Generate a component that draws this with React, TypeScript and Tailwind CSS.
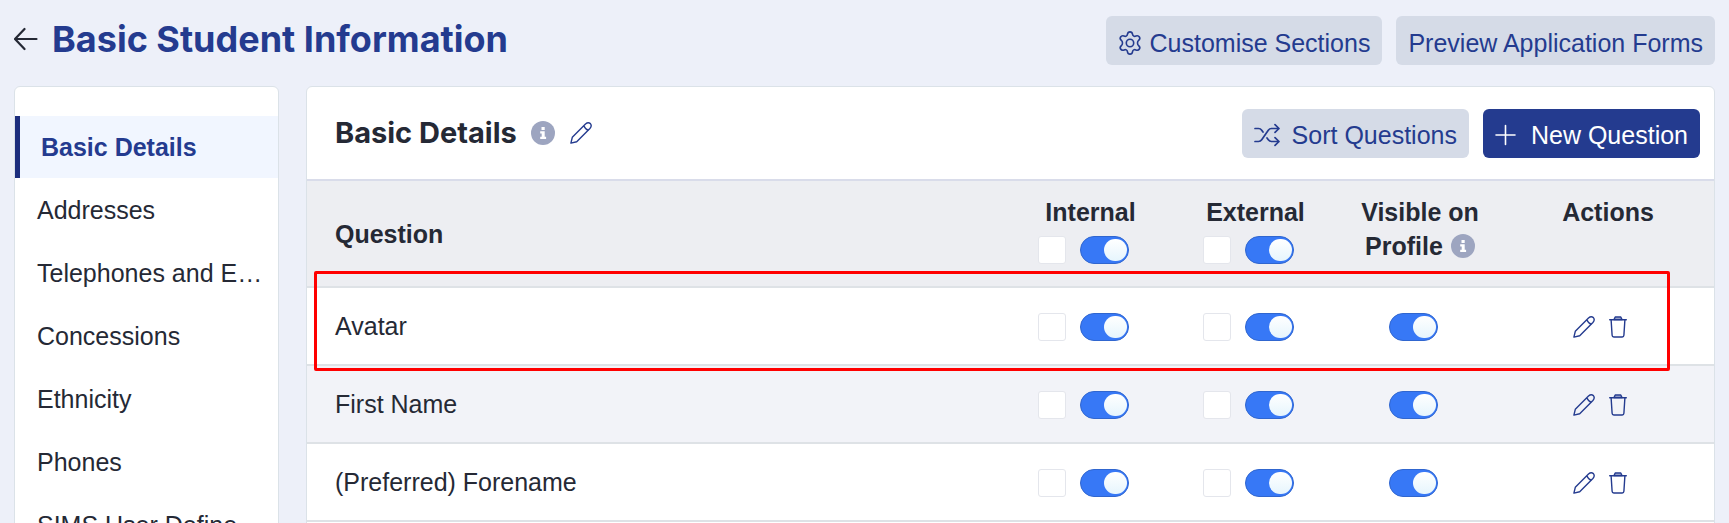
import type { ReactNode } from "react";

const INK = "text-[#252935]";
const BRAND = "text-[#243b8f]";

const sections = [
  "Basic Details",
  "Addresses",
  "Telephones and E…",
  "Concessions",
  "Ethnicity",
  "Phones",
  "SIMS User Define…",
];

const questions = [
  { label: "Avatar", highlighted: true },
  { label: "First Name", highlighted: false },
  { label: "(Preferred) Forename", highlighted: false },
];

function BackIcon() {
  return (
    <svg className="h-6 w-6" viewBox="0 0 24 24" fill="none" stroke="currentColor" strokeWidth="2.2" strokeLinecap="round" strokeLinejoin="round" aria-hidden="true">
      <path d="M22.500 12H1M10.500 2 1 12l9.500 10" />
    </svg>
  );
}

function GearIcon() {
  return (
    <svg className="h-6 w-6" viewBox="0 0 24 24" fill="none" stroke="currentColor" strokeWidth="1.6" strokeLinejoin="round" aria-hidden="true">
      <path d="M9.500 3.200Q9.800.900 12 .900t2.500 2.300q.2 1.400 1.200 1.900t2.200 0q2.300-.9 3.500.9t-.8 3.400q-1.100.9-1.100 2.600t1.100 2.600q2 1.600.8 3.400t-3.500.9q-1.200-.5-2.200 0t-1.200 1.900q-.3 2.300-2.500 2.300t-2.500-2.300q-.2-1.400-1.200-1.900t-2.200 0q-2.300.9-3.500-.9t.8-3.400q1.100-.9 1.100-2.600t-1.100-2.600q-2-1.600-.8-3.400t3.500-.9q1.200.500 2.200 0t1.200-1.900Z" />
      <circle cx="12" cy="12" r="3.700" />
    </svg>
  );
}

function ShuffleIcon() {
  return (
    <svg className="h-6 w-[26px]" viewBox="1 0 26 24" fill="none" stroke="currentColor" strokeWidth="1.700" strokeLinecap="round" strokeLinejoin="round" aria-hidden="true">
      <path d="M2 5.500h3.500q2 0 3.200 1.700l1.300 1.900M2 18.500h3.500q2 0 3.200-1.700l6.600-9.600q1.200-1.700 3.200-1.700H26M14 14.900l1.300 1.900q1.200 1.700 3.200 1.700H26M22 1.700l4 3.800-4 3.800M22 14.700l4 3.800-4 3.800" />
    </svg>
  );
}

function PlusIcon() {
  return (
    <svg className="h-6 w-6" viewBox="0 0 24 24" fill="none" stroke="currentColor" strokeWidth="1.600" strokeLinecap="round" aria-hidden="true">
      <path d="M10.500 2.500v19M1 12h19" />
    </svg>
  );
}

function PencilIcon() {
  return (
    <svg className="h-6 w-6" viewBox="0 0 24 24" fill="none" stroke="currentColor" strokeWidth="1.400" strokeLinecap="round" strokeLinejoin="round" aria-hidden="true">
      <path d="M1.900 22.100 3.300 16.300 16.500 3.100Q19.100.800 21.400 2.600 23.200 4.900 20.900 7.500L7.700 20.700ZM14.800 4.800Q16.500 8.500 19.200 9.200" />
    </svg>
  );
}

function TrashIcon() {
  return (
    <svg className="h-6 w-6" viewBox="0 0 24 24" fill="none" stroke="currentColor" strokeWidth="1.400" strokeLinecap="round" strokeLinejoin="round" aria-hidden="true">
      <path d="M3.700 4.700h16.600M5.100 4.700l1 15.600q.1 1.700 1.700 1.700h8.400q1.600 0 1.700-1.700l1-15.600" />
      <path d="M8 4.500 9.200 2h5.600L16 4.500Z" fill="currentColor" fillOpacity=".3" />
    </svg>
  );
}

function InfoIcon() {
  return (
    <svg className="h-6 w-6 text-[#9da5c0]" viewBox="0 0 24 24" role="img" aria-label="More information">
      <circle cx="12" cy="12" r="12" fill="currentColor" />
      <path d="M10.500 5.900h3.200v3h-3.200zM9.200 10.200h4.500v5.600h1.400v2.300H9.200v-2.300h1.500v-3.300H9.200z" fill="#fff" />
    </svg>
  );
}

function Button({ primary = false, children }: { primary?: boolean; children: ReactNode }) {
  const tone = primary ? "bg-[#243b8f] text-white" : "bg-[#d5dbe7] text-[#243b8f]";
  return (
    <button type="button" className={`flex h-[49px] items-center rounded-md px-3 pt-1 text-[25px] leading-8 whitespace-nowrap ${tone}`}>
      {children}
    </button>
  );
}

function Check({ label }: { label: string }) {
  return (
    <input
      type="checkbox"
      aria-label={label}
      className="h-7 w-7 shrink-0 appearance-none rounded-[3px] border border-[#e4e6ec] bg-white"
    />
  );
}

function Toggle({ label }: { label: string }) {
  return (
    <input
      type="checkbox"
      role="switch"
      defaultChecked
      aria-label={label}
      className="flex h-7 w-[49px] shrink-0 appearance-none items-center justify-end rounded-full border border-[#3066cf] bg-[#3778f6] pr-px before:h-[22px] before:w-[23px] before:rounded-full before:bg-linear-to-b before:from-white before:to-[#e6f5fd] before:content-['']"
    />
  );
}

function Controls({ label }: { label: string }) {
  return (
    <div className="flex items-center justify-center gap-3.5 pr-3.5">
      <Check label={`${label} required`} />
      <Toggle label={`${label} enabled`} />
    </div>
  );
}

export default function App() {
  return (
    <div className={`flex h-screen flex-col overflow-hidden bg-[#edf0f9] px-3.5 pt-4 font-['Liberation_Sans',Arial,sans-serif] ${INK}`}>
      <header className="mb-[21px] flex items-start justify-between">
        <div className="flex items-center gap-3.5">
          <a href="#back" aria-label="Back">
            <BackIcon />
          </a>
          <h1 className={`font-[Inter,sans-serif] text-[36px] leading-[46px] font-bold ${BRAND}`}>Basic Student Information</h1>
        </div>
        <div className="flex gap-3.5">
          <Button>
            <GearIcon />
            <span className="pl-2">Customise Sections</span>
          </Button>
          <Button>Preview Application Forms</Button>
        </div>
      </header>

      <div className="flex flex-1 items-stretch gap-[27px]">
        <nav className="w-[265px] shrink-0 rounded-t-md border border-[#dbe2e8] bg-white pt-[29px]" aria-label="Sections">
          <ul>
            {sections.map((name, i) => (
              <li key={name} className="pb-px">
                <a
                  href="#section"
                  className={
                    i === 0
                      ? "flex h-[62px] items-center border-l-[5px] border-[#1c2d7d] bg-[#f1f6ff] pt-0.5 pl-[21px] text-[25px] font-bold whitespace-nowrap text-[#243b8f]"
                      : "flex h-[62px] items-center pt-0.5 pl-[22px] text-[25px] whitespace-nowrap"
                  }
                >
                  {name}
                </a>
              </li>
            ))}
          </ul>
        </nav>

        <main className="min-w-0 flex-1 rounded-t-md border border-[#dbe2e8] bg-white">
          <div className="flex h-[94px] items-center justify-between border-b-2 border-[#d9dcea] pr-3.5 pl-7">
            <div className="flex items-center gap-3.5">
              <h2 className="font-[Inter,sans-serif] text-[29px] leading-9 font-bold">Basic Details</h2>
              <InfoIcon />
              <button type="button" aria-label="Edit section" className={BRAND}>
                <PencilIcon />
              </button>
            </div>
            <div className="flex gap-3.5">
              <Button>
                <ShuffleIcon />
                <span className="pl-3">Sort Questions</span>
              </Button>
              <Button primary>
                <PlusIcon />
                <span className="pl-3">New Question</span>
              </Button>
            </div>
          </div>

          <table className="w-full table-fixed border-separate border-spacing-0 text-[25px]">
            <colgroup>
              <col />
              <col className="w-[165px]" />
              <col className="w-[165px]" />
              <col className="w-[164px]" />
              <col className="w-[212px]" />
            </colgroup>
            <thead>
              <tr className="h-[107px] bg-[#edeef2] leading-[34px] [&>th]:border-b-2 [&>th]:border-[#dee2e6]">
                <th scope="col" className="pl-7 text-left">Question</th>
                <th scope="col" className="pt-3.5 align-top">
                  Internal
                  <div className="pt-[7px]"><Controls label="Internal, all" /></div>
                </th>
                <th scope="col" className="pt-3.5 align-top">
                  External
                  <div className="pt-[7px]"><Controls label="External, all" /></div>
                </th>
                <th scope="col" className="pt-3.5 align-top">
                  Visible on
                  <div className="flex items-center justify-center gap-2">
                    Profile <InfoIcon />
                  </div>
                </th>
                <th scope="col" className="pt-3.5 align-top">Actions</th>
              </tr>
            </thead>
            <tbody>
              {questions.map(({ label, highlighted }) => (
                <tr key={label} className="relative h-[78px] even:bg-[#f2f3f8] [&>td]:border-b-2 [&>td]:border-[#dee2e6] [&>td]:pt-0.5">
                  <td className="pl-7">
                    {label}
                    {highlighted && (
                      <div className="pointer-events-none absolute -top-[17px] right-[44px] -bottom-[5px] left-[7px] z-10 rounded-xs border-3 border-[#ff0000]" />
                    )}
                  </td>
                  <td><Controls label={`${label} internal`} /></td>
                  <td><Controls label={`${label} external`} /></td>
                  <td>
                    <div className="flex justify-center pr-3.5">
                      <Toggle label={`${label} visible on profile`} />
                    </div>
                  </td>
                  <td>
                    <div className={`flex justify-center gap-2.5 pr-3.5 ${BRAND}`}>
                      <button type="button" aria-label={`Edit ${label}`}><PencilIcon /></button>
                      <button type="button" aria-label={`Delete ${label}`}><TrashIcon /></button>
                    </div>
                  </td>
                </tr>
              ))}
            </tbody>
          </table>
        </main>
      </div>
    </div>
  );
}
